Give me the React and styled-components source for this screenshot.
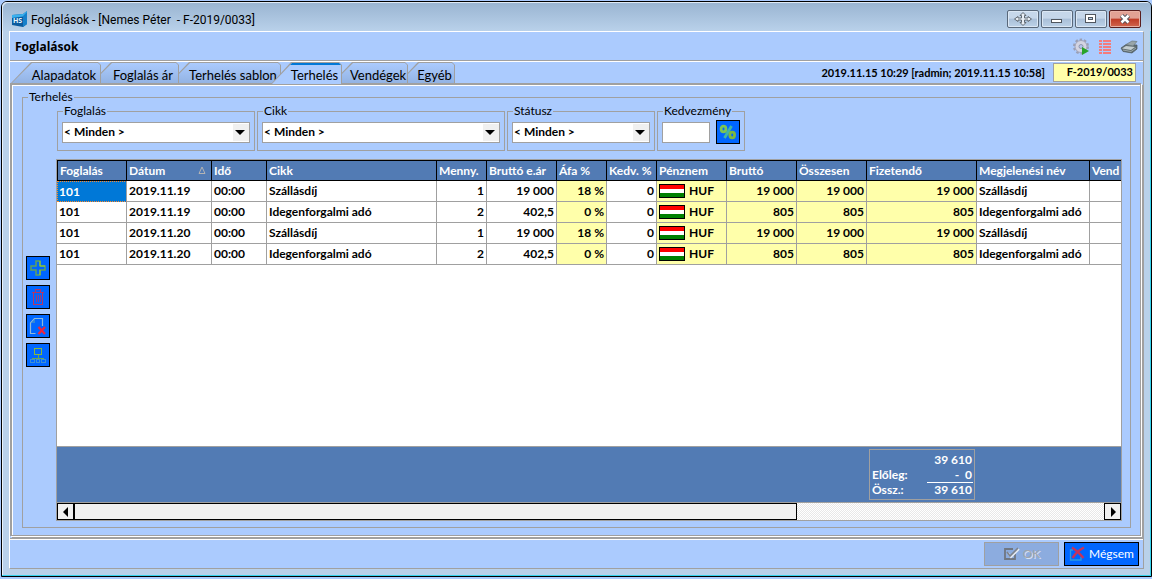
import React, { useState } from "react";
import styled, { createGlobalStyle, css } from "styled-components";

const GREY = "#a0a0a0";
const PANEL = "#abcbfe";
const FRAME = "#b9d1ea";
const HEAD = "#527bb4";
const YELLOW = "#ffffaa";

const GlobalStyle = createGlobalStyle`
  * {
    box-sizing: border-box;
  }
  body {
    margin: 0;
    background: ${PANEL};
    font-family: Lato, sans-serif;
    font-size: 12px;
    line-height: 14px;
    color: #000;
  }
  button, input, select {
    font: inherit;
    color: inherit;
    margin: 0;
  }
`;

const Page = styled.div`
  display: flex;
  min-height: 100vh;
  padding: 1px 0 2px 1px;
`;

const Window = styled.div`
  flex: 1;
  min-width: 0;
  display: flex;
  flex-direction: column;
  border: 1px solid #000;
  border-radius: 6px 6px 0 0;
  background: ${FRAME};
  box-shadow: inset -1px -1px 0 #35d3ee, inset 1px 1px 0 #eaf3fc;
`;

const TitleBar = styled.header`
  display: flex;
  align-items: center;
  gap: 3px;
  height: 29px;
  padding: 4px 10px 0 9px;
  border-radius: 5px 5px 0 0;
  background: linear-gradient(#99b4d1, ${FRAME});
  box-shadow: inset 1px 1px 0 #dfeaf6;
`;

const WindowTitle = styled.h1`
  flex: 1;
  margin: 0;
  padding-top: 2px;
  font: 12px/16px Roboto, sans-serif;
  white-space: pre;
`;

const WindowButtons = styled.div`
  display: flex;
  gap: 2px;
`;

const WindowButton = styled.button`
  display: flex;
  align-items: center;
  justify-content: center;
  width: 32px;
  height: 18px;
  padding: 0;
  border: 1px solid #59687a;
  border-radius: 2px;
  background: linear-gradient(#c6d7ea 45%, #a9bfd8 50%, #bdd2e8);
  box-shadow: inset 0 0 0 1px #dbe7f4;
  ${(props) =>
    props.$close &&
    css`
      border-color: #5a1e1e;
      background: linear-gradient(#e2a194 45%, #bf3b26 50%, #d0664f);
      box-shadow: inset 0 0 0 1px #e8b0a4;
    `}
`;

const Client = styled.main`
  flex: 1;
  display: flex;
  flex-direction: column;
  margin: 0 7px 7px 7px;
  border: 1px solid ${GREY};
  border-top-color: #fff;
  border-left-color: #fff;
  background: ${PANEL};
`;

const PageHead = styled.div`
  display: flex;
  align-items: center;
  justify-content: space-between;
  height: 30px;
  padding: 0 5px;
  border-bottom: 1px solid #fff;
  box-shadow: inset 0 -1px 0 ${GREY};
`;

const PageTitle = styled.h2`
  margin: 0;
  font: 700 12px/16px "Open Sans", sans-serif;
`;

const Tools = styled.div`
  display: flex;
  gap: 6px;
`;

const ToolButton = styled.button`
  display: flex;
  width: 18px;
  height: 18px;
  padding: 0;
  border: 0;
  background: none;
`;

const TabRow = styled.div`
  display: flex;
  justify-content: space-between;
  height: 21px;
`;

const Tabs = styled.nav`
  display: flex;
  padding-left: 1px;
`;

const Tab = styled.button`
  position: relative;
  z-index: ${(props) => (props.$active ? 20 : props.$order)};
  width: ${(props) => props.$width}px;
  height: ${(props) => (props.$active ? 22 : 21)}px;
  margin-right: -10px;
  padding: 4px 2px 0 18px;
  border: 0;
  background: ${GREY};
  clip-path: polygon(0 100%, 20px 0, calc(100% - 3px) 0, 100% 3px, 100% 100%);
  font-size: 13px;
  text-align: center;
  white-space: nowrap;

  &::before {
    content: "";
    position: absolute;
    z-index: -1;
    inset: 1px 1px 0 1px;
    background: ${(props) => (props.$active ? PANEL : "linear-gradient(#abcbfe, #93b3e3)")};
    clip-path: polygon(0 100%, 20px 0, calc(100% - 2px) 0, 100% 2px, 100% 100%);
    border-top: ${(props) => (props.$active ? "2px solid #0078d7" : 0)};
  }
`;

const Info = styled.div`
  display: flex;
  align-items: center;
  gap: 8px;
  padding-right: 7px;
  font-size: 11px;
  font-weight: 700;
`;

const CodeField = styled.input`
  width: 83px;
  height: 19px;
  padding: 0 2px 2px;
  border: 1px solid ${GREY};
  background: ${YELLOW};
  font-weight: 700;
  text-align: right;
`;

const TabPage = styled.section`
  flex: 1;
  display: flex;
  margin: 0 2px 3px 0;
  padding: 5px 9px 7px 10px;
  border: solid ${GREY};
  border-width: 2px 1px 1px 2px;
  box-shadow: inset 1px 1px 0 #fff, 1px 1px 0 #fff, 2px 2px 0 ${GREY};
`;

const Group = styled.fieldset`
  flex: 1;
  min-width: 0;
  display: flex;
  align-items: center;
  gap: 6px;
  margin: 0;
  padding: 0 8px 6px 3px;
  border: 1px solid ${GREY};
`;

const Legend = styled.legend`
  height: 14px;
  margin-left: ${(props) => props.$indent}px;
  padding: 0 1px;
`;

const SideBar = styled.div`
  display: flex;
  flex-direction: column;
  gap: 5px;
  padding-bottom: 2px;
`;

const IconButton = styled.button`
  display: flex;
  align-items: center;
  justify-content: center;
  width: 24px;
  height: 24px;
  padding: 0;
  border: 1px solid #000;
  background: #0066ff;
`;

const Content = styled.div`
  flex: 1;
  min-width: 0;
  align-self: stretch;
  display: flex;
  flex-direction: column;
  gap: 8px;
`;

const Filters = styled.div`
  display: flex;
  gap: 2px;
  padding-left: 1px;
`;

const Filter = styled.fieldset`
  display: flex;
  align-items: center;
  gap: 6px;
  width: ${(props) => props.$width}px;
  min-width: 0;
  margin: 0;
  padding: 2px 4px 6px;
  border: 1px solid ${GREY};
`;

const SelectBox = styled.div`
  flex: 1;
  position: relative;

  &::after {
    content: "";
    position: absolute;
    top: 2px;
    right: 1px;
    width: 16px;
    height: 17px;
    background: #f0f0f0;
    pointer-events: none;
  }
  &::before {
    content: "";
    position: absolute;
    z-index: 1;
    top: 8px;
    right: 5px;
    border: 5px solid transparent;
    border-top-color: #000;
    border-bottom: 0;
    pointer-events: none;
  }
`;

const Select = styled.select`
  display: block;
  width: 100%;
  height: 21px;
  padding: 0 1px;
  appearance: none;
  border: 1px solid ${GREY};
  border-radius: 0;
  background: #fff;
  font-weight: 700;
`;

const DiscountInput = styled.input`
  width: 48px;
  height: 21px;
  border: 1px solid ${GREY};
  background: #fff;
`;

const Grid = styled.div`
  flex: 1;
  display: flex;
  flex-direction: column;
  border: 1px solid ${GREY};
  background: #fff;
`;

const TableArea = styled.div`
  flex: 1;
  overflow: hidden;
`;

const Table = styled.table`
  width: 1133px;
  table-layout: fixed;
  border-collapse: separate;
  border-spacing: 0;
  font-weight: 700;
`;

const Th = styled.th`
  width: ${(props) => props.$width}px;
  height: 21px;
  padding: 0 2px;
  border: solid #000;
  border-width: 1px 1px 1px 0;
  background: ${HEAD};
  color: #fff;
  text-align: left;
  white-space: nowrap;

  &:first-child {
    border-left-width: 1px;
  }
`;

const SortLabel = styled.span`
  display: flex;
  align-items: center;
  justify-content: space-between;
  padding-right: 3px;
`;

const Td = styled.td`
  height: 21px;
  padding: 0 2px;
  border: solid ${GREY};
  border-width: 0 1px 1px 0;
  background: ${(props) => (props.$yellow ? YELLOW : "#fff")};
  text-align: ${(props) => (props.$right ? "right" : "left")};
  white-space: nowrap;
  ${(props) =>
    props.$selected &&
    css`
      background: #0078d7;
      color: #fff;
      border: 1px dotted #ff8728;
      border-right: 1px solid ${GREY};
      padding-left: 1px;
    `}
`;

const Currency = styled.span`
  display: flex;
  align-items: center;
  gap: 4px;
`;

const Flag = styled.span`
  width: 26px;
  height: 14px;
  border: 1px solid #000;
  background: linear-gradient(#f00 4px, #fff 4px 8px, #008000 8px);
`;

const Summary = styled.div`
  display: flex;
  height: 57px;
  padding: 2px 146px 2px 1px;
  justify-content: flex-end;
  border: solid ${GREY};
  border-width: 1px 0;
  background: ${HEAD};
`;

const Totals = styled.dl`
  display: grid;
  grid-template-columns: 55px 1fr;
  grid-template-rows: 15px 15px 15px;
  width: 106px;
  margin: 0;
  padding: 3px 1px 0 2px;
  border: 1px solid ${GREY};
  color: #fff;
  font-weight: 700;
`;

const TotalLabel = styled.dt`
  white-space: nowrap;
`;

const TotalValue = styled.dd`
  margin: 0;
  padding-right: 1px;
  text-align: right;
  white-space: pre;
  box-shadow: ${(props) => (props.$sum ? "0 -1px 0 #fff" : "none")};
`;

const ScrollBar = styled.div`
  display: flex;
  height: 17px;
  background: repeating-conic-gradient(#e8e8e8 0 25%, #fff 0 50%) 0 0 / 2px 2px;
`;

const ScrollButton = styled.button`
  display: flex;
  align-items: center;
  justify-content: center;
  width: 17px;
  padding: 0;
  border: 1px solid #000;
  background: #f0f0f0;
`;

const ScrollTrack = styled.div`
  flex: 1;
  display: flex;
`;

const ScrollThumb = styled.div`
  width: calc(70% + 2px);
  border: 1px solid #000;
  background: #f0f0f0;
`;

const Footer = styled.footer`
  display: flex;
  align-items: center;
  justify-content: flex-end;
  gap: 5px;
  height: 29px;
  padding: 0 4px 1px 0;
  border-top: 1px solid #fff;
  box-shadow: 0 -1px 0 ${GREY};
`;

const FooterButton = styled.button`
  display: flex;
  align-items: center;
  gap: 3px;
  width: 75px;
  height: 24px;
  padding: 0 4px;
  border: 1px solid #000;
  background: #0066ff;
  color: #fff;
  white-space: nowrap;

  &:disabled {
    justify-content: center;
    border-color: ${GREY};
    background: #8cacdf;
    color: #a0a4ac;
    text-shadow: 1px 1px 0 #d9e3f3;
  }
`;

const LogoIcon = () => (
  <svg width="17" height="16" viewBox="0 0 17 16">
    <path d="M1 4 12 3 16 0v13L12 16 1 14z" fill="#0b5a9e" />
    <path d="M1 4l11-1 4-3v5L1 7z" fill="#39b0ee" />
    <path d="M12 5l4-4v12l-4 3z" fill="#1680cb" />
    <text x="2" y="12" fontSize="7" fontWeight="700" fontFamily="Open Sans" fill="#e8f6ff">HS</text>
  </svg>
);

const MoveIcon = () => (
  <svg width="20" height="16" viewBox="0 0 20 16">
    <path
      d="M10 1.500l3 3h-1.500V7H15V5.500L18.500 8 15 10.500V9h-3.500v2.500H13l-3 3-3-3h1.500V9H5v1.500L1.500 8 5 5.500V7h3.500V4.500H7z"
      fill="#e9eff6"
      stroke="#606871"
    />
  </svg>
);

const MinIcon = () => (
  <svg width="12" height="12" shapeRendering="crispEdges">
    <rect x="0.500" y="6.500" width="10" height="3" fill="#fff" stroke="#50565e" />
  </svg>
);

const MaxIcon = () => (
  <svg width="12" height="12" shapeRendering="crispEdges">
    <rect x="0.500" y="1.500" width="10" height="8" fill="#fff" stroke="#50565e" />
    <rect x="3.500" y="4.500" width="4" height="2" fill="#b9d1ea" stroke="#50565e" />
  </svg>
);

const CloseIcon = () => (
  <svg width="14" height="12" viewBox="0 0 14 12">
    <path d="M3.500 2.500l7 7M10.500 2.500l-7 7" stroke="#4b4f58" strokeWidth="4.500" />
    <path d="M3.500 2.500l7 7M10.500 2.500l-7 7" stroke="#fff" strokeWidth="2.500" />
  </svg>
);

const GearIcon = () => (
  <svg width="18" height="18" viewBox="0 0 18 18">
    <circle cx="9" cy="8.500" r="6.500" fill="none" stroke="#9a9fb5" strokeWidth="3" strokeDasharray="2.300 1.780" />
    <circle cx="9" cy="8.500" r="6" fill="#d3d4e2" stroke="#a0a4ba" />
    <circle cx="9" cy="8.500" r="2" fill="#b2c6ec" stroke="#9096ad" />
    <path d="M10 9l7 4-7 4z" fill="#28a428" />
  </svg>
);

const ListIcon = () => (
  <svg width="18" height="18" viewBox="0 0 18 18" shapeRendering="crispEdges" fill="#f47c7c">
    {[2, 5, 8, 11, 14].map((y) => (
      <React.Fragment key={y}>
        <rect x="3" y={y} width="3" height="2" />
        <rect x="7" y={y} width="8" height="2" />
      </React.Fragment>
    ))}
  </svg>
);

const PrinterIcon = () => (
  <svg width="18" height="18" viewBox="0 0 18 18">
    <path d="M1 10l5-3.500 11 .5v4l-5 4-9-1.500z" fill="#5f6c70" stroke="#4c575c" strokeWidth="0.700" />
    <path d="M6 6.500L12 3l5 .5-4 4.500z" fill="#98a5a9" stroke="#6c797d" strokeWidth="0.700" />
    <path d="M2 10.500l4-2.500 9 1-4 3z" fill="#c3cdd0" />
    <path d="M3 12l8 1.500 5-3.500" fill="none" stroke="#9ba8ac" />
  </svg>
);

const PercentIcon = () => (
  <svg width="18" height="16" viewBox="0 0 18 16" fill="none" strokeWidth="2.800">
    <path d="M12.500 2l-7 12" stroke="#3fb6a8" />
    <ellipse cx="4.500" cy="5" rx="2.400" ry="2.800" stroke="#7cc653" />
    <ellipse cx="13.200" cy="11" rx="2.400" ry="2.800" stroke="#7cb93e" />
  </svg>
);

const PlusIcon = () => (
  <svg width="16" height="16" viewBox="0 0 16 16" fill="none">
    <path d="M6 1h4v5h5v4h-5v5H6v-5H1V6h5z" stroke="#5fa25e" strokeWidth="1.500" />
    <path d="M10 1v5h5M10 15v-5" stroke="#9ad02f" />
  </svg>
);

const TrashIcon = () => (
  <svg width="16" height="18" viewBox="0 0 16 18" fill="none" stroke="#b53564" shapeRendering="crispEdges">
    <path d="M2 4.500h12M5.500 4V1.500h5V4" />
    <path d="M3.500 5v11.500h9V5" />
    <path d="M6.500 7v7M8.500 7v7M10.500 7v7" strokeOpacity="0.800" />
  </svg>
);

const PageDeleteIcon = () => (
  <svg width="18" height="18" viewBox="0 0 18 18" fill="none">
    <path d="M6.500 16.500h-5V6L5.500 1.500h8V9" stroke="#8fb9d8" strokeWidth="1.200" />
    <path d="M2 6h4V2z" fill="#2f86d8" />
    <path d="M9.500 10l6.500 7M16 10l-6.500 7" stroke="#f0233c" strokeWidth="2.200" />
  </svg>
);

const NetworkIcon = () => (
  <svg width="18" height="18" viewBox="0 0 18 18" fill="none" shapeRendering="crispEdges">
    <rect x="5.500" y="2.500" width="7" height="6" stroke="#86b83c" />
    <path d="M9 9v3M3 12.500h12" stroke="#6aa84f" />
    <path d="M1.500 13.500h4v3h-4zM7.500 13.500h3v3h-3zM12.500 13.500h4v3h-4z" stroke="#3f8fd0" />
  </svg>
);

const OkIcon = () => (
  <svg width="17" height="16" viewBox="0 0 17 16" fill="none">
    <path d="M12 8v5H2V3h8" stroke="#707782" strokeWidth="1.800" />
    <path d="M4 6l3 4 8-8" stroke="#e4e9f2" strokeWidth="2" transform="translate(1 1)" />
    <path d="M4 6l3 4 8-8" stroke="#7c828c" strokeWidth="1.600" />
  </svg>
);

const CancelIcon = () => (
  <svg width="17" height="16" viewBox="0 0 17 16" fill="none">
    <path d="M4 4H1.500v10H12v-3" stroke="#2b9ae0" strokeWidth="1.300" />
    <path d="M3 1.500C7 4 11 8 14.500 12M15 1.500C10 4 6 8 3.500 12" stroke="#c8325a" strokeWidth="2.400" />
  </svg>
);

const SortIcon = () => (
  <svg width="8" height="9" viewBox="0 0 8 9">
    <path d="M4 1L1 7.500h6z" fill="none" stroke="#b4b4b4" />
  </svg>
);

const ArrowIcon = ({ d }) => (
  <svg width="6" height="10" viewBox="0 0 6 10">
    <path d={d} />
  </svg>
);

const tabs = [
  { name: "Alapadatok", width: 90 },
  { name: "Foglalás ár", width: 88 },
  { name: "Terhelés sablon", width: 112 },
  { name: "Terhelés", width: 71 },
  { name: "Vendégek", width: 76 },
  { name: "Egyéb", width: 57 },
];

const filters = [
  { name: "Foglalás", width: 198 },
  { name: "Cikk", width: 248 },
  { name: "Státusz", width: 148 },
];

const columns = [
  { name: "Foglalás", width: 70 },
  { name: "Dátum", width: 85, sorted: true },
  { name: "Idő", width: 55 },
  { name: "Cikk", width: 170 },
  { name: "Menny.", width: 50, right: true },
  { name: "Bruttó e.ár", width: 70, right: true },
  { name: "Áfa %", width: 50, right: true, yellow: true },
  { name: "Kedv. %", width: 50, right: true },
  { name: "Pénznem", width: 70, yellow: true, currency: true },
  { name: "Bruttó", width: 70, right: true, yellow: true },
  { name: "Összesen", width: 70, right: true, yellow: true },
  { name: "Fizetendő", width: 110, right: true, yellow: true },
  { name: "Megjelenési név", width: 113 },
  { name: "Vend", width: 100 },
];

const room = (date) => ["101", date, "00:00", "Szállásdíj", "1", "19 000", "18 %", "0", "HUF", "19 000", "19 000", "19 000", "Szállásdíj", ""];
const tax = (date) => ["101", date, "00:00", "Idegenforgalmi adó", "2", "402,5", "0 %", "0", "HUF", "805", "805", "805", "Idegenforgalmi adó", ""];

const rows = [room("2019.11.19"), tax("2019.11.19"), room("2019.11.20"), tax("2019.11.20")];

const ChargeTable = () => {
  const [selected, setSelected] = useState("0-0");

  return (
    <Table>
      <thead>
        <tr>
          {columns.map((col) => (
            <Th key={col.name} $width={col.width} scope="col">
              {col.sorted ? <SortLabel>{col.name}<SortIcon /></SortLabel> : col.name}
            </Th>
          ))}
        </tr>
      </thead>
      <tbody>
        {rows.map((row, r) => (
          <tr key={r}>
            {row.map((value, c) => (
              <Td
                key={c}
                $right={columns[c].right}
                $yellow={columns[c].yellow}
                $selected={selected === `${r}-${c}`}
                onClick={() => setSelected(`${r}-${c}`)}
              >
                {columns[c].currency ? <Currency><Flag />{value}</Currency> : value}
              </Td>
            ))}
          </tr>
        ))}
      </tbody>
    </Table>
  );
};

const App = () => {
  const [activeTab, setActiveTab] = useState("Terhelés");

  return (
    <>
      <GlobalStyle />
      <Page>
        <Window>
          <TitleBar>
            <LogoIcon />
            <WindowTitle>{"Foglalások - [Nemes Péter  - F-2019/0033]"}</WindowTitle>
            <WindowButtons>
              <WindowButton aria-label="Move"><MoveIcon /></WindowButton>
              <WindowButton aria-label="Minimize"><MinIcon /></WindowButton>
              <WindowButton aria-label="Maximize"><MaxIcon /></WindowButton>
              <WindowButton aria-label="Close" $close><CloseIcon /></WindowButton>
            </WindowButtons>
          </TitleBar>
          <Client>
            <PageHead>
              <PageTitle>Foglalások</PageTitle>
              <Tools>
                <ToolButton aria-label="Run"><GearIcon /></ToolButton>
                <ToolButton aria-label="List"><ListIcon /></ToolButton>
                <ToolButton aria-label="Print"><PrinterIcon /></ToolButton>
              </Tools>
            </PageHead>
            <TabRow>
              <Tabs>
                {tabs.map((tab, i) => (
                  <Tab
                    key={tab.name}
                    $width={tab.width}
                    $order={tabs.length - i}
                    $active={tab.name === activeTab}
                    onClick={() => setActiveTab(tab.name)}
                  >
                    {tab.name}
                  </Tab>
                ))}
              </Tabs>
              <Info>
                <label htmlFor="code">2019.11.15 10:29 [radmin; 2019.11.15 10:58]</label>
                <CodeField id="code" readOnly value="F-2019/0033" />
              </Info>
            </TabRow>
            <TabPage>
              <Group>
                <Legend $indent={2}>Terhelés</Legend>
                <SideBar>
                  <IconButton aria-label="Add"><PlusIcon /></IconButton>
                  <IconButton aria-label="Delete"><TrashIcon /></IconButton>
                  <IconButton aria-label="Cancel item"><PageDeleteIcon /></IconButton>
                  <IconButton aria-label="Split"><NetworkIcon /></IconButton>
                </SideBar>
                <Content>
                  <Filters>
                    {filters.map((filter) => (
                      <Filter key={filter.name} $width={filter.width}>
                        <Legend $indent={1}>{filter.name}</Legend>
                        <SelectBox>
                          <Select aria-label={filter.name}>
                            <option>&lt; Minden &gt;</option>
                          </Select>
                        </SelectBox>
                      </Filter>
                    ))}
                    <Filter $width={88}>
                      <Legend $indent={1}>Kedvezmény</Legend>
                      <DiscountInput aria-label="Kedvezmény" />
                      <IconButton aria-label="%"><PercentIcon /></IconButton>
                    </Filter>
                  </Filters>
                  <Grid>
                    <TableArea>
                      <ChargeTable />
                    </TableArea>
                    <Summary>
                      <Totals>
                        <TotalLabel />
                        <TotalValue>39 610</TotalValue>
                        <TotalLabel>Előleg:</TotalLabel>
                        <TotalValue>{"-  0"}</TotalValue>
                        <TotalLabel>Össz.:</TotalLabel>
                        <TotalValue $sum>39 610</TotalValue>
                      </Totals>
                    </Summary>
                    <ScrollBar>
                      <ScrollButton aria-label="Scroll left"><ArrowIcon d="M5 0v10L0 5z" /></ScrollButton>
                      <ScrollTrack>
                        <ScrollThumb />
                      </ScrollTrack>
                      <ScrollButton aria-label="Scroll right"><ArrowIcon d="M1 0v10l5-5z" /></ScrollButton>
                    </ScrollBar>
                  </Grid>
                </Content>
              </Group>
            </TabPage>
            <Footer>
              <FooterButton disabled><OkIcon />OK</FooterButton>
              <FooterButton><CancelIcon />Mégsem</FooterButton>
            </Footer>
          </Client>
        </Window>
      </Page>
    </>
  );
};

export default App;
